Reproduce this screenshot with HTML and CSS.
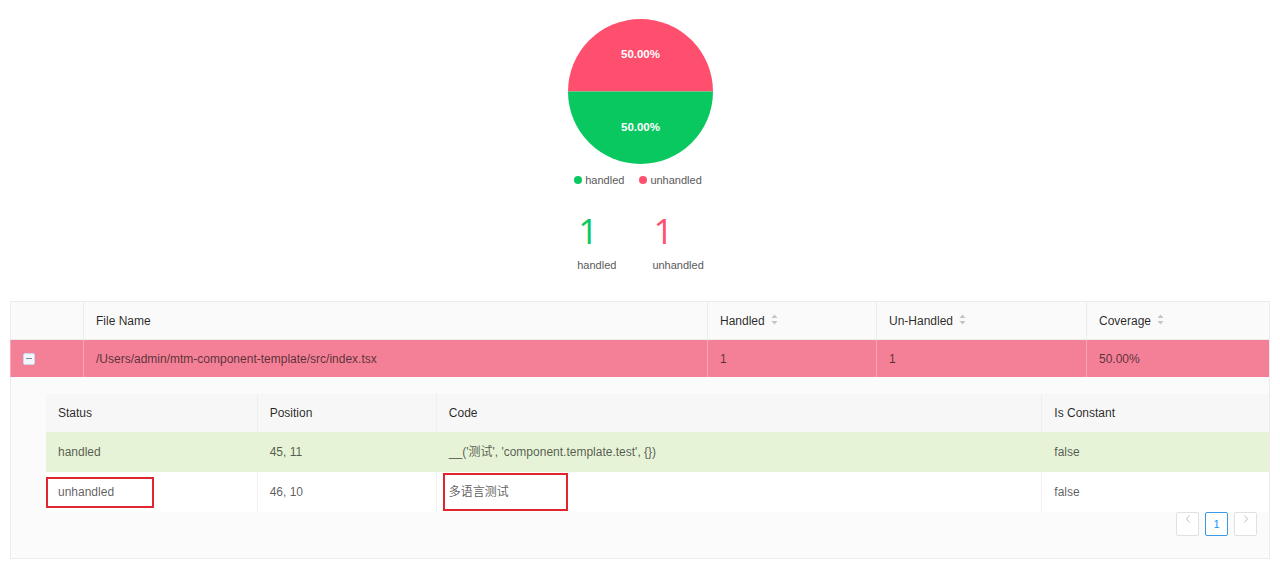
FILE: index.html
```html
<!DOCTYPE html>
<html lang="en">
<head>
    <meta charset="UTF-8">
    <title>I18n Coverage Report</title>
    <link rel="stylesheet" href="styles.css">
</head>
<body>
    <div class="summary">
        <svg class="pie" width="145" height="145" viewBox="0 0 145 145">
            <path d="M0 72.5 A72.5 72.5 0 0 1 145 72.5 Z" fill="#ff4f6f"/>
            <path d="M0 72.5 A72.5 72.5 0 0 0 145 72.5 Z" fill="#08c85f"/>
            <text x="72.5" y="39" class="pie-label">50.00%</text>
            <text x="72.5" y="112" class="pie-label">50.00%</text>
        </svg>
        <div class="legend">
            <span class="legend-item"><i class="dot green"></i>handled</span>
            <span class="legend-item"><i class="dot red"></i>unhandled</span>
        </div>
        <div class="stats">
            <div class="stat">
                <div class="stat-num green-text">1</div>
                <div class="stat-label">handled</div>
            </div>
            <div class="stat">
                <div class="stat-num red-text">1</div>
                <div class="stat-label">unhandled</div>
            </div>
        </div>
    </div>

    <div class="table-wrap">
        <table class="files">
            <colgroup>
                <col style="width:73px"><col style="width:624px"><col style="width:169px"><col style="width:210px"><col style="width:183px">
            </colgroup>
            <thead>
                <tr>
                    <th></th>
                    <th>File Name</th>
                    <th>Handled <span class="sorter"><svg width="7" height="11" viewBox="0 0 7 11"><path d="M3.5 0.5 L6.5 4 L0.5 4 Z M0.5 7 L6.5 7 L3.5 10.5 Z" fill="#c4c4c4"/></svg></span></th>
                    <th>Un-Handled <span class="sorter"><svg width="7" height="11" viewBox="0 0 7 11"><path d="M3.5 0.5 L6.5 4 L0.5 4 Z M0.5 7 L6.5 7 L3.5 10.5 Z" fill="#c4c4c4"/></svg></span></th>
                    <th>Coverage <span class="sorter"><svg width="7" height="11" viewBox="0 0 7 11"><path d="M3.5 0.5 L6.5 4 L0.5 4 Z M0.5 7 L6.5 7 L3.5 10.5 Z" fill="#c4c4c4"/></svg></span></th>
                </tr>
            </thead>
            <tbody>
                <tr class="row-bad">
                    <td><span class="expand-icon"></span></td>
                    <td>/Users/admin/mtm-component-template/src/index.tsx</td>
                    <td>1</td>
                    <td>1</td>
                    <td>50.00%</td>
                </tr>
                <tr class="expanded">
                    <td colspan="5">
                        <table class="details">
                            <colgroup>
                                <col style="width:211px"><col style="width:179px"><col style="width:605px"><col style="width:227px">
                            </colgroup>
                            <thead>
                                <tr>
                                    <th>Status</th>
                                    <th>Position</th>
                                    <th>Code</th>
                                    <th>Is Constant</th>
                                </tr>
                            </thead>
                            <tbody>
                                <tr class="row-ok">
                                    <td>handled</td>
                                    <td>45, 11</td>
                                    <td>__('测试', 'component.template.test', {})</td>
                                    <td>false</td>
                                </tr>
                                <tr>
                                    <td>unhandled<span class="mark mark-status"></span></td>
                                    <td>46, 10</td>
                                    <td>多语言测试<span class="mark mark-code"></span></td>
                                    <td>false</td>
                                </tr>
                            </tbody>
                        </table>
                        <div class="pagination">
                            <span class="page-btn"><svg width="6" height="8" viewBox="0 0 6 8"><path d="M4.5 0.5 L1.5 4 L4.5 7.5" fill="none" stroke="#bfbfbf" stroke-width="1"/></svg></span>
                            <span class="page-btn active">1</span>
                            <span class="page-btn"><svg width="6" height="8" viewBox="0 0 6 8"><path d="M1.5 0.5 L4.5 4 L1.5 7.5" fill="none" stroke="#bfbfbf" stroke-width="1"/></svg></span>
                        </div>
                    </td>
                </tr>
            </tbody>
        </table>
    </div>
</body>
</html>
```

FILE: styles.css
```css
body {
    margin: 0;
    background: #fff;
    font-family: "Liberation Sans", "Noto Sans CJK SC", sans-serif;
    color: rgba(0, 0, 0, 0.65);
    font-size: 12px;
}
.summary {
    display: flex;
    flex-direction: column;
    align-items: center;
    padding-top: 19px;
}
.pie {
    display: block;
}
.pie-label {
    fill: #fff;
    font-size: 11.5px;
    font-weight: bold;
    text-anchor: middle;
    font-family: "Liberation Sans", sans-serif;
}
.legend {
    margin-top: 9px;
    display: flex;
    gap: 15px;
    height: 14px;
    line-height: 14px;
    font-size: 11px;
    color: #595959;
    margin-right: 4px;
}
.legend-item {
    display: flex;
    align-items: center;
}
.dot {
    width: 8px;
    height: 8px;
    border-radius: 50%;
    margin-right: 3px;
}
.green { background: #08c85f; }
.red { background: #ff4f6f; }
.green-text { color: #08c85f; }
.red-text { color: #ff4f6f; }
.stats {
    margin-top: 26px;
    display: flex;
    gap: 36px;
    margin-left: 1px;
}
.stat-num {
    font-family: "Open Sans", "Liberation Sans", sans-serif;
    font-weight: 400;
    font-size: 35px;
    line-height: 36px;
    height: 36px;
    padding-left: 1px;
}
.stat-label {
    margin-top: 9px;
    font-size: 11px;
    line-height: 14px;
    color: #595959;
}
.table-wrap {
    margin: 29px 11px 0 10px;
}
table {
    border-collapse: collapse;
    table-layout: fixed;
    width: 100%;
}
.files {
    border: 1px solid #ececec;
}
.files > thead > tr > th {
    height: 37px;
    background: #fafafa;
    color: rgba(0, 0, 0, 0.85);
    font-weight: normal;
    text-align: left;
    padding: 0 12px;
    border-left: 1px solid #ececec;
    border-bottom: 1px solid #ececec;
}
.sorter {
    display: inline-block;
    vertical-align: middle;
    margin-left: 3px;
    margin-top: -3px;
}
.sorter svg {
    display: block;
}
.files > tbody > tr > td {
    padding: 0 12px;
    border-left: 1px solid #ececec;
}
.row-bad td {
    height: 37px;
    background: #f38097;
    border-left-color: #f6a5b4 !important;
}
.expand-icon {
    display: block;
    position: relative;
    width: 10px;
    height: 10px;
    border: 1px solid #c9d7ea;
    background: #f3f7fd;
    border-radius: 2px;
}
.expand-icon::after {
    content: "";
    position: absolute;
    left: 2px;
    top: 4px;
    width: 6px;
    height: 1px;
    background: #7a8899;
}
.expanded > td {
    background: #fbfbfb;
    padding: 17px 0 22px 35px !important;
}
.details th {
    height: 38px;
    background: #f7f7f7;
    color: rgba(0, 0, 0, 0.85);
    font-weight: normal;
    text-align: left;
    padding: 0 12px;
    border-left: 1px solid #efefef;
}
.details td {
    position: relative;
    height: 40px;
    line-height: 16px;
    padding: 0 12px;
    background: #fff;
    border-left: 1px solid #f2f2f2;
}
.details th:first-child,
.details td:first-child {
    border-left: none;
}
.details .row-ok td {
    background: #e6f3d6;
    border-left-color: #e6f3d6;
}
.mark {
    position: absolute;
    border: 2px solid #e0262e;
    box-sizing: border-box;
}
.mark-status {
    left: 0;
    top: 5px;
    width: 108px;
    height: 31px;
}
.mark-code {
    left: 6px;
    top: 1px;
    width: 125px;
    height: 38px;
}
.pagination {
    display: flex;
    justify-content: flex-end;
    gap: 6px;
    padding-right: 12px;
}
.page-btn {
    box-sizing: border-box;
    width: 23px;
    height: 24px;
    border: 1px solid #e1e1e1;
    border-radius: 2px;
    background: #fff;
    display: flex;
    justify-content: center;
    padding-top: 2px;
}
.page-btn.active {
    border-color: #3b9ae8;
    color: #1890ff;
    font-size: 11px;
    align-items: center;
    padding-top: 0;
}
```
